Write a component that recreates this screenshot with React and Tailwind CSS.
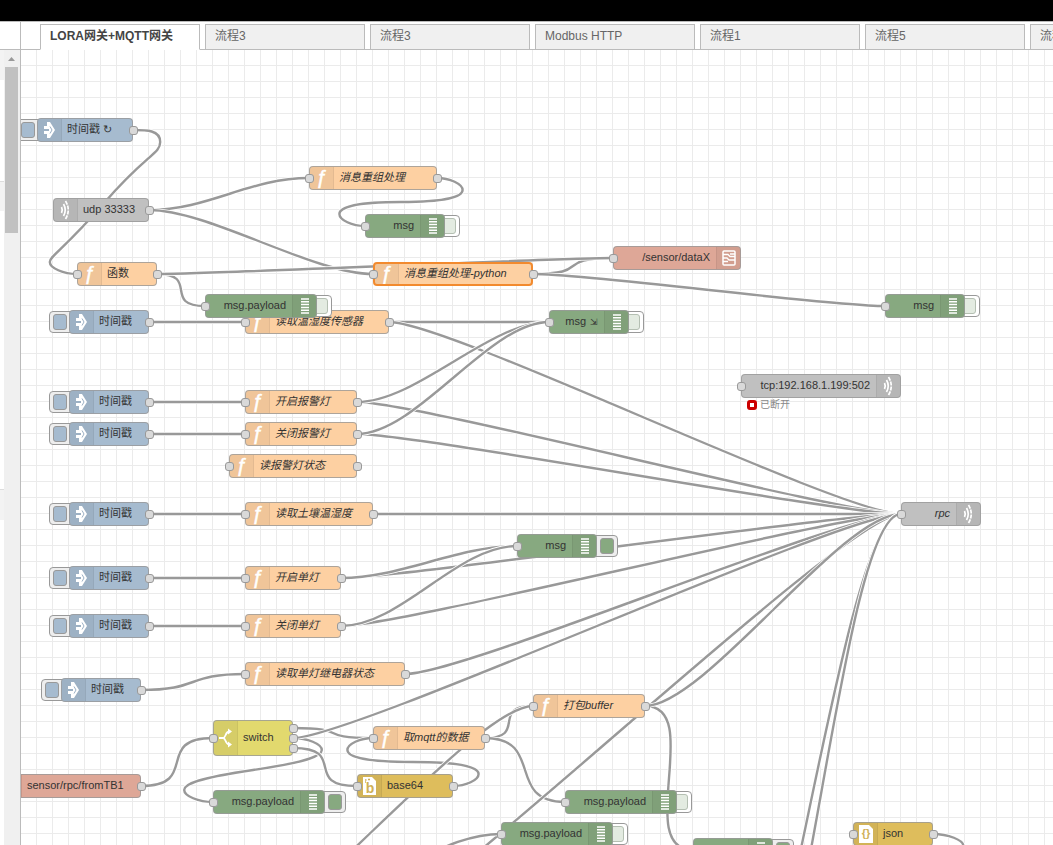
import React, { useState } from 'react';
import clsx from 'clsx';

const NODE_WIDTH = 80;
const NODE_HEIGHT = 24;

const TABS = ['LORA网关+MQTT网关', '流程3', '流程3', 'Modbus HTTP', '流程1', '流程5', '流程6'];

const TYPES = {
  inject: { color: 'bg-[#a6bbcf]', icon: 'inject', button: 'left', output: true },
  udp: { color: 'bg-[#c0c0c0]', icon: 'waves', output: true },
  tcpOut: { color: 'bg-[#c0c0c0]', icon: 'waves', iconRight: true, input: true },
  func: { color: 'bg-[#fdd0a2]', icon: 'func', input: true, output: true },
  debug: { color: 'bg-[#87a980]', icon: 'debug', iconRight: true, button: 'right', input: true },
  mqttOut: { color: 'bg-[#dea797]', icon: 'bridge', iconRight: true, input: true },
  mqttIn: { color: 'bg-[#dea797]', icon: 'bridge', output: true },
  switch: { color: 'bg-[#e2d96e]', icon: 'switch', input: true, output: true },
  base64: { color: 'bg-[#debd5c]', icon: 'base64', input: true, output: true },
  json: { color: 'bg-[#debd5c]', icon: 'json', input: true, output: true },
};

// x is the left edge of a node, y its vertical centre
const NODES = [
  { id: 'tick', type: 'inject', x: 16, y: 80, w: 96, label: '时间戳 ↻' },
  { id: 'udp', type: 'udp', x: 32, y: 160, w: 96, label: 'udp 33333' },
  { id: 'fn', type: 'func', x: 56, y: 224, w: 80, label: '函数' },
  { id: 'regroup', type: 'func', x: 288, y: 128, w: 128, label: '消息重组处理', italic: true },
  { id: 'msg1', type: 'debug', x: 344, y: 176, w: 80, label: 'msg' },
  { id: 'python', type: 'func', x: 352, y: 224, w: 160, label: '消息重组处理-python', italic: true, selected: true },
  { id: 'dataX', type: 'mqttOut', x: 592, y: 208, w: 128, label: '/sensor/dataX' },
  { id: 'msg2', type: 'debug', x: 864, y: 256, w: 80, label: 'msg' },
  { id: 'in1', type: 'inject', x: 48, y: 272, w: 80, label: '时间戳' },
  { id: 'readTemp', type: 'func', x: 224, y: 272, w: 144, label: '读取温湿度传感器', italic: true },
  { id: 'payload1', type: 'debug', x: 184, y: 256, w: 112, label: 'msg.payload' },
  { id: 'msg3', type: 'debug', x: 528, y: 272, w: 80, label: 'msg', mark: '⇲' },
  { id: 'tcp', type: 'tcpOut', x: 720, y: 336, w: 160, label: 'tcp:192.168.1.199:502', status: '已断开' },
  { id: 'in2', type: 'inject', x: 48, y: 352, w: 80, label: '时间戳' },
  { id: 'alarmOn', type: 'func', x: 224, y: 352, w: 112, label: '开启报警灯', italic: true },
  { id: 'in3', type: 'inject', x: 48, y: 384, w: 80, label: '时间戳' },
  { id: 'alarmOff', type: 'func', x: 224, y: 384, w: 112, label: '关闭报警灯', italic: true },
  { id: 'alarmState', type: 'func', x: 208, y: 416, w: 128, label: '读报警灯状态', italic: true },
  { id: 'in4', type: 'inject', x: 48, y: 464, w: 80, label: '时间戳' },
  { id: 'readSoil', type: 'func', x: 224, y: 464, w: 128, label: '读取土壤温湿度', italic: true },
  { id: 'in5', type: 'inject', x: 48, y: 528, w: 80, label: '时间戳' },
  { id: 'lampOn', type: 'func', x: 224, y: 528, w: 96, label: '开启单灯', italic: true },
  { id: 'in6', type: 'inject', x: 48, y: 576, w: 80, label: '时间戳' },
  { id: 'lampOff', type: 'func', x: 224, y: 576, w: 96, label: '关闭单灯', italic: true },
  { id: 'in7', type: 'inject', x: 40, y: 640, w: 80, label: '时间戳' },
  { id: 'relay', type: 'func', x: 224, y: 624, w: 160, label: '读取单灯继电器状态', italic: true },
  { id: 'msg4', type: 'debug', x: 496, y: 496, w: 80, label: 'msg', active: true },
  { id: 'rpc', type: 'tcpOut', x: 880, y: 464, w: 80, label: 'rpc', italic: true },
  { id: 'fromTB', type: 'mqttIn', x: -24, y: 736, w: 144, label: 'sensor/rpc/fromTB1' },
  { id: 'switch', type: 'switch', x: 192, y: 688, w: 80, h: 36, label: 'switch', outputs: 3 },
  { id: 'payload2', type: 'debug', x: 192, y: 752, w: 112, label: 'msg.payload', active: true },
  { id: 'mqttData', type: 'func', x: 352, y: 688, w: 112, label: '取mqtt的数据', italic: true },
  { id: 'base64', type: 'base64', x: 336, y: 736, w: 96, label: 'base64' },
  { id: 'buffer', type: 'func', x: 512, y: 656, w: 112, label: '打包buffer', italic: true },
  { id: 'payload3', type: 'debug', x: 544, y: 752, w: 112, label: 'msg.payload' },
  { id: 'payload4', type: 'debug', x: 480, y: 784, w: 112, label: 'msg.payload' },
  { id: 'msg5', type: 'debug', x: 672, y: 800, w: 80, label: '', active: true },
  { id: 'json', type: 'json', x: 832, y: 784, w: 80, label: 'json' },
];

// an end is a node id, or a point where the node lies below the visible area
const LINKS = [
  ['tick', 'fn'],
  ['udp', 'regroup'],
  ['udp', 'python'],
  ['regroup', 'msg1'],
  ['fn', 'payload1'],
  ['python', 'dataX'],
  ['fn', 'dataX'],
  ['python', 'msg2'],
  ['in1', 'readTemp'],
  ['in2', 'alarmOn'],
  ['in3', 'alarmOff'],
  ['in4', 'readSoil'],
  ['in5', 'lampOn'],
  ['in6', 'lampOff'],
  ['in7', 'relay'],
  ['readTemp', 'msg3'],
  ['readTemp', 'rpc'],
  ['alarmOn', 'rpc'],
  ['alarmOff', 'rpc'],
  ['alarmOn', 'msg3'],
  ['alarmOff', 'msg3'],
  ['readSoil', 'rpc'],
  ['lampOn', 'rpc'],
  ['lampOff', 'rpc'],
  ['lampOn', 'msg4'],
  ['lampOff', 'msg4'],
  ['relay', 'rpc'],
  ['fromTB', 'switch'],
  ['switch', 'mqttData', 0],
  ['switch', 'payload2', 1],
  ['switch', 'rpc', 1],
  ['switch', 'base64', 2],
  ['base64', 'mqttData'],
  ['mqttData', 'buffer'],
  ['mqttData', 'payload3'],
  [[192, 905], 'buffer'],
  ['buffer', 'msg5'],
  [[304, 910], 'rpc'],
  ['buffer', 'rpc'],
  [[312, 835], 'payload4'],
  [[696, 1057], 'rpc'],
  [[720, 1024], 'rpc'],
  ['json', [832, 856]],
];

const portY = (node, index = 0) => node.y + (index - ((node.outputs || 1) - 1) / 2) * 10;

function endPoint(end, isSource, port) {
  if (Array.isArray(end)) return end;
  const node = NODES.find((n) => n.id === end);
  return isSource ? [node.x + node.w, portY(node, port)] : [node.x, node.y];
}

function linkPath([x1, y1], [x2, y2]) {
  const dx = x2 - x1;
  const dy = y2 - y1;
  if (dx > 0) {
    const delta = Math.sqrt(dx * dx + dy * dy);
    const reach = 0.75 * Math.min(delta, NODE_WIDTH);
    return `M${x1} ${y1} C${x1 + reach} ${y1} ${x2 - reach} ${y2} ${x2} ${y2}`;
  }
  // target is behind the source: loop out, across and back in
  const near = Math.min(Math.abs(dx), Math.abs(dy));
  const scale = 0.4 - 0.2 * Math.max(0, (NODE_WIDTH - near) / NODE_WIDTH);
  const midX = Math.floor(x2 - dx / 2);
  const midY = Math.floor(y2 - dy / 2);
  const cp = NODE_HEIGHT / 2;
  const down = dy > 0;
  const sign = down ? 1 : -1;
  const lo = down ? Math.min : Math.max;
  const hi = down ? Math.max : Math.min;
  const yq = (y2 + midY) / 2;
  const topX = x1 + NODE_WIDTH * scale;
  const topY = lo(yq - dy / 2, y1 + sign * cp);
  const bottomX = x2 - NODE_WIDTH * scale;
  const bottomY = hi(yq, y2 - sign * cp);
  const sideX = (x1 + topX) / 2;
  const c = [
    [sideX, y1],
    [topX, hi(y1, topY - sign * cp)],
    [sideX, lo(midY, topY + sign * cp)],
    [bottomX, hi(midY, bottomY - sign * cp)],
    [(x2 + bottomX) / 2, y2],
  ];
  if (c[2][1] === topY + sign * cp) {
    if (Math.abs(dy) < cp * 10) c[1][1] = topY - (sign * cp) / 2;
    c[3][1] = bottomY - (sign * cp) / 2;
  }
  return `M${x1} ${y1} C${c[0]} ${c[1]} ${topX} ${topY} S${c[2]} ${midX} ${midY} S${c[3]} ${bottomX} ${bottomY} S${c[4]} ${x2} ${y2}`;
}

const Wires = () => (
  <svg className="absolute inset-0 w-full h-full" fill="none" aria-hidden="true">
    {LINKS.map(([from, to, port], i) => {
      const d = linkPath(endPoint(from, true, port), endPoint(to, false));
      return (
        <g key={i}>
          <path d={d} stroke="#fff" strokeWidth="4" />
          <path d={d} stroke="#999" strokeWidth="2.4" />
        </g>
      );
    })}
  </svg>
);

const ICONS = {
  inject: (
    <g fill="#fff">
      <path d="M9 4h3l5 8-5 8H9v-4H6v-3h5v-2H6V8h3z" />
      <path d="M12 8.500l2 3.500-2 3.500" fill="none" stroke="#9db1c5" strokeWidth="1" />
    </g>
  ),
  func: (
    <text x="12" y="18" textAnchor="middle" fill="#fff" stroke="#fff" strokeWidth="0.5" fontSize="20" fontFamily="Liberation Sans, sans-serif">ƒ</text>
  ),
  waves: (
    <g fill="none" stroke="#fff" strokeWidth="1.7">
      <path d="M7.500 9q1.500 3 0 6" />
      <path d="M9.500 6q3.500 6 0 12" />
      <path d="M11.500 3q5.500 9 0 18" strokeDasharray="4 1" />
    </g>
  ),
  debug: <path d="M8 5h8M8 7.800h8M8 10.600h8M8 13.400h8M8 16.200h8M8 19h8" stroke="#fff" strokeWidth="1.5" />,
  bridge: (
    <g fill="none" stroke="#fff" strokeWidth="1.5">
      <rect x="6" y="5" width="12" height="14" rx="1" />
      <path d="M6 8.500h5l2 2h5M6 12h4l2 2h6M6 15.500h5M13 8h5" strokeWidth="1.3" />
    </g>
  ),
  switch: (
    <g fill="none" stroke="#fff" strokeWidth="1.8">
      <path d="M5 12h4c3 0 2-6 6-6.500M9 12c3 0 2 6 6 6.500" />
      <path d="M14 2.500l4 3-4 3zM14 15.500l4 3-4 3z" fill="#fff" stroke="none" />
    </g>
  ),
  base64: (
    <g>
      <path d="M5 3h9l4 4v14H5z" fill="#fff" />
      <path d="M7 6h1.500M10 5.500h2M7 8h1" stroke="#cfb057" strokeWidth="1.4" />
      <text x="12" y="19" textAnchor="middle" fill="#cfb057" fontSize="14" fontWeight="bold" fontFamily="Liberation Sans, sans-serif">b</text>
    </g>
  ),
  json: (
    <g>
      <path d="M5 3h10l4 4v14H5z" fill="#fff" />
      <text x="12" y="15" textAnchor="middle" fill="#cfb057" fontSize="11" fontWeight="bold" fontFamily="Liberation Sans, sans-serif">{'{}'}</text>
    </g>
  ),
};

const Port = ({ className, style }) => (
  <span className={clsx('absolute size-[9px] rounded-[3px] border border-[#999] bg-[#d9d9d9]', className)} style={style} />
);

function NodeButton({ side, color, label, active, onToggle }) {
  const lit = side === 'left' || active;
  return (
    <button
      type="button"
      aria-label={label}
      onClick={onToggle}
      className={clsx(
        'absolute top-[1px] flex h-[22px] w-7 items-center rounded-[4px] border border-[#999]',
        side === 'left' ? '-left-5 justify-start pl-[3px]' : 'justify-end pr-[3px]',
        side === 'right' && (lit ? '-right-[21px]' : '-right-[15px]'),
        lit ? 'bg-[#eee]' : 'bg-white'
      )}
    >
      <span className={clsx('h-4 w-[14px] rounded-[3px] border', lit ? color : 'bg-[#e3ebe1]', lit ? 'border-[#999]' : 'border-[#b4bfb2]')} />
    </button>
  );
}

function FlowNode({ node }) {
  const type = TYPES[node.type];
  const height = node.h || NODE_HEIGHT;
  const [active, setActive] = useState(!!node.active);

  return (
    <div className="absolute" style={{ left: node.x, top: node.y - height / 2, width: node.w, height }}>
      {type.button && (
        <NodeButton
          side={type.button}
          color={type.color}
          label={node.label || 'msg'}
          active={active}
          onToggle={() => setActive(!active)}
        />
      )}
      <div
        className={clsx(
          'relative flex h-full items-stretch overflow-hidden rounded-[4px] text-[11px] leading-none text-[#333]',
          type.color,
          type.iconRight && 'flex-row-reverse',
          node.selected ? 'border-2 border-[#f28a2e]' : 'border border-[#999]/80'
        )}
      >
        <span
          className={clsx(
            'flex w-6 shrink-0 items-center justify-center border-black/5 bg-black/5',
            type.iconRight ? 'border-l' : 'border-r'
          )}
        >
          <svg viewBox="0 0 24 24" className="size-6 shrink-0">{ICONS[type.icon]}</svg>
        </span>
        <span
          className={clsx(
            'flex items-center gap-1 whitespace-nowrap pb-0.5',
            type.iconRight ? 'px-[6px]' : 'px-[5px]',
            node.italic && 'italic'
          )}
        >
          {node.label}
          {node.mark && <span className="pt-0.5 text-[9px]">{node.mark}</span>}
        </span>
      </div>
      {type.input && <Port className="-left-1" style={{ top: height / 2 - 4 }} />}
      {type.output &&
        Array.from({ length: node.outputs || 1 }, (_, i) => (
          <Port key={i} className="-right-[5px]" style={{ top: portY(node, i) - node.y + height / 2 - 4 }} />
        ))}
      {node.status && (
        <div className="absolute left-1.5 top-full flex items-center gap-[3px] text-[10px] leading-[14px] whitespace-nowrap text-[#888]">
          <span className="size-[10px] rounded-[3px] border-[3px] border-[#c00] bg-white" />
          {node.status}
        </div>
      )}
    </div>
  );
}

const TabBar = ({ current, onSelect }) => (
  <div role="tablist" className="flex h-[29px] shrink-0 items-end gap-[5px] overflow-hidden border-t border-[#bbb] bg-white pl-[19px] shadow-[inset_0_-1px_0_#bbb]">
    {TABS.map((name, i) => (
      <button
        key={i}
        type="button"
        role="tab"
        aria-selected={i === current}
        onClick={() => onSelect(i)}
        className={clsx(
          'h-[26px] w-40 shrink-0 truncate border border-[#bbb] px-[9px] pb-0.5 text-left text-xs leading-none',
          i === current ? 'border-b-white bg-white font-bold text-[#444]' : 'bg-[#f0f0f0] text-[#666]'
        )}
      >
        {name}
      </button>
    ))}
  </div>
);

const PaletteEdge = () => (
  <aside className="flex w-[21px] shrink-0 flex-col border-r border-t border-[#bbb] bg-white">
    <div className="h-7 shrink-0 border-b border-[#bbb]" />
    <div className="flex grow">
      <div className="flex w-1 flex-col">
        <div className="h-[30px] bg-[#f3f3f3]" />
        <div className="h-[101px]" />
        <div className="h-[30px] border-t border-[#ddd] bg-[#f3f3f3]" />
        <div className="h-[278px]" />
        <div className="h-[31px] border-t border-[#ddd] bg-[#f3f3f3]" />
      </div>
      <div className="flex grow flex-col items-start bg-[#f0f0f0] pl-px">
        <svg viewBox="0 0 13 17" className="h-[17px] w-[13px] shrink-0">
          <path d="M3 11h7L6.500 7z" fill="#999" />
        </svg>
        <div className="h-[166px] w-[13px] bg-[#c1c1c1]" />
      </div>
    </div>
  </aside>
);

export default function App() {
  const [tab, setTab] = useState(0);

  return (
    <div className="flex h-screen flex-col overflow-hidden bg-white font-['Liberation_Sans','Noto_Sans_CJK_SC',sans-serif]">
      <header className="h-[21px] shrink-0 bg-black" />
      <div className="flex min-h-0 grow">
        <PaletteEdge />
        <main className="flex min-w-0 grow flex-col">
          <TabBar current={tab} onSelect={setTab} />
          <div className="relative grow overflow-hidden bg-[linear-gradient(to_right,#ebebeb_1px,transparent_1px),linear-gradient(to_bottom,#ebebeb_1px,transparent_1px)] bg-[size:16px_16px] bg-[position:15px_15px]">
            <Wires />
            {NODES.map((node) => (
              <FlowNode key={node.id} node={node} />
            ))}
          </div>
        </main>
      </div>
    </div>
  );
}
